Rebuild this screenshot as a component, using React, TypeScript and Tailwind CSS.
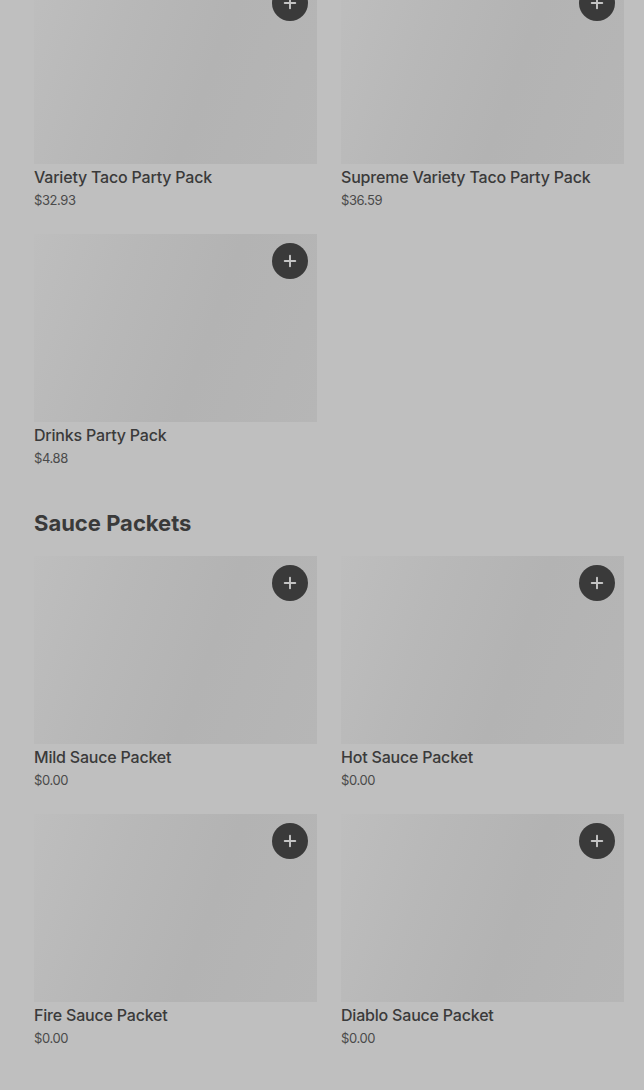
import { Plus } from "lucide-react"

type Item = { name: string; price: string }

const partyPacks: Item[] = [
  { name: "Variety Taco Party Pack", price: "$32.93" },
  { name: "Supreme Variety Taco Party Pack", price: "$36.59" },
  { name: "Drinks Party Pack", price: "$4.88" },
]

const sauces: Item[] = [
  { name: "Mild Sauce Packet", price: "$0.00" },
  { name: "Hot Sauce Packet", price: "$0.00" },
  { name: "Fire Sauce Packet", price: "$0.00" },
  { name: "Diablo Sauce Packet", price: "$0.00" },
]

function ItemCard({ item }: { item: Item }) {
  return (
    <div className="flex flex-col">
      <div className="relative h-[188px] w-full bg-[linear-gradient(110deg,#bebebe_0%,#b8b8b8_30%,#b3b3b3_60%,#b6b6b6_100%)]">
        <button className="absolute top-[9px] right-[9px] flex h-9 w-9 items-center justify-center rounded-full bg-[#3a3a3a] text-[#c4c4c4]">
          <Plus size={18} strokeWidth={2.6} />
        </button>
      </div>
      <p className="mt-[3px] text-[16px] leading-[20px] font-medium text-[#3a3a3a] tracking-[-0.2px]">
        {item.name}
      </p>
      <p className="mt-[4px] text-[13px] leading-[18px] text-[#4a4a4a] tracking-[-0.4px]">
        {item.price}
      </p>
    </div>
  )
}

export default function App() {
  return (
    <div
      className="min-h-[1090px] w-full overflow-hidden bg-[#bfbfbf] pl-[34px] pr-[20px]"
      style={{ fontFamily: "Inter, 'Open Sans', sans-serif" }}
    >
      <div className="-mt-[24px] grid grid-cols-2 gap-x-[24px] gap-y-[25px]">
        {partyPacks.map((item) => (
          <ItemCard key={item.name} item={item} />
        ))}
      </div>

      <h2 className="mt-[42px] mb-[19px] text-[22px] leading-[28px] font-bold text-[#3a3a3a] tracking-[0px]">
        Sauce Packets
      </h2>

      <div className="grid grid-cols-2 gap-x-[24px] gap-y-[25px]">
        {sauces.map((item) => (
          <ItemCard key={item.name} item={item} />
        ))}
      </div>
    </div>
  )
}
